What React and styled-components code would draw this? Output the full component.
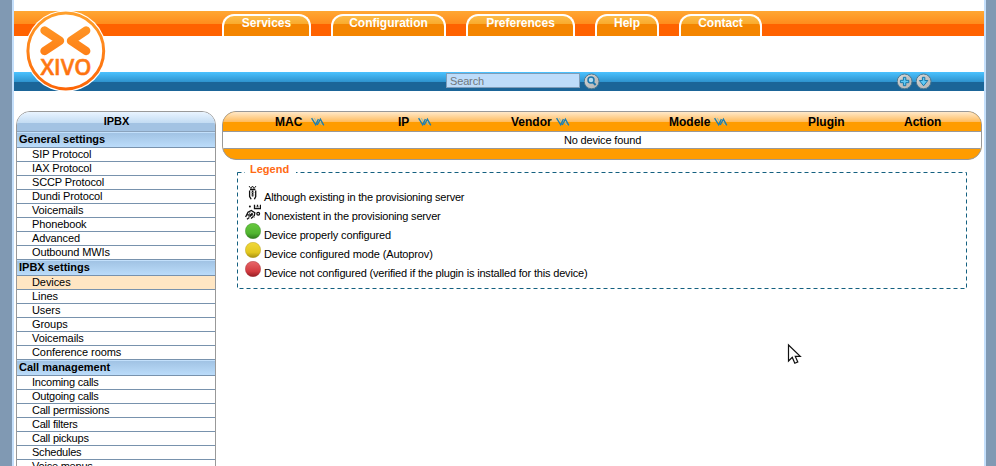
import React from "react";
import styled, { createGlobalStyle } from "styled-components";

const GlobalStyle = createGlobalStyle`
  * { box-sizing: border-box; }
  html, body { margin: 0; padding: 0; height: 100%; overflow: hidden; }
  body { font: 11px/13px "Liberation Sans", Arial, sans-serif; color: #000; background: #8099b3; }
`;

const Page = styled.div`
  width: 974px;
  height: 466px;
  margin-left: 12px;
  padding-top: 11px;
  background: #fff;
  border: solid #c4dffb;
  border-width: 0 2px;
  overflow: hidden;
`;

const Header = styled.header`
  position: relative;
  height: 80px;
`;

const NavBar = styled.nav`
  display: flex;
  align-items: flex-end;
  gap: 20px;
  height: 25px;
  padding-left: 208px;
  background: linear-gradient(#ffa733 0, #ff8c1c 13px, #ff6200 13px);
`;

const Tab = styled.a`
  width: ${(p) => p.$width}px;
  height: 22px;
  border: 2px solid #fff;
  border-bottom: 0;
  border-radius: 12px 12px 0 0;
  background: linear-gradient(#fdbb48 0, #f9ab2c 8px, #f48500 8px);
  color: #fff;
  font-size: 12px;
  font-weight: bold;
  line-height: 14px;
  text-align: center;
  white-space: nowrap;
`;

const ToolBar = styled.div`
  display: flex;
  align-items: flex-start;
  height: 19px;
  margin-top: 36px;
  padding: 1px 52px 0 432px;
  background: linear-gradient(#4bc2ff 0, #2e93ce 10px, #1b6598 10px);
`;

const SearchField = styled.input`
  width: 134px;
  height: 15px;
  margin: 0 4px 0 0;
  padding: 0 3px;
  border: 1px solid #7f9db9;
  border-radius: 0;
  outline: 0;
  background: #bddcfa;
  color: #71777c;
  font: 11px/13px "Liberation Sans", Arial, sans-serif;
  letter-spacing: -0.15px;
`;

const Actions = styled.div`
  display: flex;
  gap: 3px;
  margin-left: auto;
`;

const RoundIcon = styled.svg`
  display: block;
  width: 16px;
  height: 17px;
`;

const LogoMark = styled.svg`
  position: absolute;
  left: 11px;
  top: -1px;
  width: 82px;
  height: 81px;
`;

const Body = styled.div`
  display: flex;
  align-items: flex-start;
  gap: 6px;
  padding: 20px 2px 0;
`;

const Sidebar = styled.aside`
  flex: none;
  width: 200px;
  border: 1px solid #999;
  border-radius: 14px 14px 0 0;
  overflow: hidden;
`;

const SidebarTitle = styled.h1`
  height: 20px;
  margin: 0;
  padding-left: 1px;
  border-bottom: 1px solid #8aa3bd;
  background: linear-gradient(#e9f4ff 0, #c3dcf3 11px, #a3c3e3 11px);
  font-size: 11px;
  line-height: 19px;
  text-align: center;
`;

const SectionTitle = styled.h2`
  height: 16px;
  margin: 0;
  padding-left: 2px;
  border-bottom: 1px solid #7892ad;
  background: linear-gradient(#c3e0fb 0, #c3e0fb 1px, #a1c3e4 1px, #bbdcfa 15px);
  font-size: 11px;
  line-height: 15px;
`;

const MenuItem = styled.a`
  display: block;
  height: 14px;
  padding-left: 15px;
  border-bottom: 1px solid #7892ad;
  background: ${(p) => (p.$active ? "#ffe6c3" : "#fff")};
  letter-spacing: ${(p) => p.$tracking}px;
  line-height: 13px;
`;

const Main = styled.main`
  flex: 1;
  min-width: 0;
`;

const DeviceTable = styled.section`
  height: 49px;
  border: 1px solid #999;
  border-radius: 14px;
  background: #ff9c00;
  overflow: hidden;
`;

const HeadRow = styled.div`
  display: grid;
  grid-template-columns: 123px 113px 158px 139px 96px 1fr;
  height: 20px;
  padding-left: 52px;
  border-bottom: 1px solid #999;
  background: linear-gradient(#ffe9ca 0, #ffbb5c 10px, #ff9c00 10px);
  font-size: 12px;
  font-weight: bold;
`;

const HeadCell = styled.div`
  display: flex;
  align-items: flex-start;
  gap: ${(p) => p.$gap}px;
  line-height: 20px;
`;

const SortGlyph = styled.svg`
  width: 14px;
  height: 10px;
  margin-top: 5px;
`;

const EmptyRow = styled.div`
  height: 17px;
  padding-left: 1px;
  border-bottom: 1px solid #999;
  background: #fff;
  letter-spacing: -0.15px;
  line-height: 17px;
  text-align: center;
`;

const LegendBox = styled.fieldset`
  width: 730px;
  height: 126px;
  margin: 3px 0 0 15px;
  padding: 0;
  border: 0;
  position: relative;
`;

const LegendTitle = styled.legend`
  position: relative;
  z-index: 1;
  margin-left: 8px;
  padding: 0 7px 0 5px;
  height: 13px;
  background: #fff;
  color: #ff6a13;
  font-weight: bold;
`;

const DashedFrame = styled.svg`
  position: absolute;
  left: 0;
  top: -4px;
  width: 730px;
  height: 117px;
`;

const LegendList = styled.ul`
  position: relative;
  margin: 9px 0 0 8px;
  padding: 0;
  list-style: none;
`;

const LegendRow = styled.li`
  display: flex;
  align-items: flex-end;
  gap: 3px;
  height: 19px;
`;

const LegendText = styled.span`
  letter-spacing: ${(p) => p.$tracking}px;
  line-height: 13px;
`;

const LegendIcon = styled.svg`
  width: 16px;
  height: 16px;
  margin-bottom: 3px;
`;

const Pointer = styled.svg`
  position: absolute;
  left: 787px;
  top: 343px;
  width: 15px;
  height: 23px;
`;

const tabs = [
  ["Services", 89],
  ["Configuration", 115],
  ["Preferences", 109],
  ["Help", 64],
  ["Contact", 83],
];

const columns = [
  { name: "MAC", gap: 9, sortable: true },
  { name: "IP", gap: 9, sortable: true },
  { name: "Vendor", gap: 4, sortable: true },
  { name: "Modele", gap: 4, sortable: true },
  { name: "Plugin" },
  { name: "Action" },
];

const menu = [
  ["General settings", -0.13, ["SIP Protocol", "IAX Protocol", "SCCP Protocol", "Dundi Protocol", "Voicemails", "Phonebook", "Advanced", "Outbound MWIs"]],
  ["IPBX settings", -0.08, ["Devices", "Lines", "Users", "Groups", "Voicemails", "Conference rooms"]],
  ["Call management", -0.22, ["Incoming calls", "Outgoing calls", "Call permissions", "Call filters", "Call pickups", "Schedules", "Voice menus"]],
];

const legend = [
  ["exists", "Although existing in the provisioning server", -0.2],
  ["missing", "Nonexistent in the provisioning server", -0.18],
  ["green", "Device properly configured", -0.15],
  ["yellow", "Device configured mode (Autoprov)", -0.13],
  ["red", "Device not configured (verified if the plugin is installed for this device)", -0.18],
];

const ballColors = {
  green: ["#68c93f", "#51b52f", "#2f7a1b"],
  yellow: ["#f0d83c", "#e3c81f", "#a8900f"],
  red: ["#e8686a", "#d33b40", "#951d24"],
};

function Logo() {
  return (
    <LogoMark viewBox="0 0 82 81">
      <defs>
        <linearGradient id="logo" gradientUnits="userSpaceOnUse" x1="0" y1="2" x2="0" y2="80">
          <stop offset="0" stopColor="#ffa02c" />
          <stop offset="1" stopColor="#fd6506" />
        </linearGradient>
      </defs>
      <circle cx="40.8" cy="41" r="40.6" fill="#fff" />
      <circle cx="40.8" cy="41" r="37.9" fill="none" stroke="url(#logo)" strokeWidth="3" />
      <path d="M19.5 20.5 L35 30.8 L19.5 41 M61.2 20.5 L46 30.8 L61.2 41" fill="none" stroke="url(#logo)" strokeWidth="8.4" strokeLinecap="round" strokeLinejoin="round" />
      <text x="15.5" y="64.6" textLength="51" lengthAdjust="spacingAndGlyphs" fontFamily="Open Sans, sans-serif" fontSize="21.5" fontWeight="600" fill="url(#logo)" stroke="url(#logo)" strokeWidth=".5" strokeLinejoin="round">XIVO</text>
    </LogoMark>
  );
}

function ToolIcon({ kind }) {
  return (
    <RoundIcon viewBox="0 0 16 17">
      <defs>
        <linearGradient id="metal" x1="0" y1="0" x2="1" y2="1">
          <stop offset="0" stopColor="#ddd" />
          <stop offset=".5" stopColor="#c2c2c2" />
          <stop offset="1" stopColor="#b5b5b5" />
        </linearGradient>
      </defs>
      <circle cx="7.6" cy="8.4" r="7.4" fill="url(#metal)" stroke="#4b7890" />
      {kind === "search" && (
        <g fill="none" stroke="#1d76aa">
          <path d="m9.1 9.4 2.5 2.6" strokeWidth="2" />
          <circle cx="7" cy="7" r="3" fill="#b4dcf0" strokeWidth="1.5" />
        </g>
      )}
      {kind === "add" && <path d="M6.4 4.3h2.4v3h3v2.4h-3v3H6.4v-3h-3V7.3h3z" fill="#5fc8f5" stroke="#1677a8" />}
      {kind === "down" && <path d="M6.4 4.3h2.4v3.2h3l-4.2 5.3-4.2-5.3h3z" fill="#5fc8f5" stroke="#1677a8" />}
    </RoundIcon>
  );
}

function SortIcon() {
  return (
    <SortGlyph viewBox="0 0 14 10" fill="none">
      <path d="M3.4 1.2 6.2 6.2M8.8 4.8 10.6 8" stroke="#8abfc4" strokeWidth="1" />
      <path d="M.6 1.2 4.7 7.8 7.4 2M6.2 8 9.4 2.2l3.4 6.2" stroke="#167eb5" strokeWidth="1.3" />
    </SortGlyph>
  );
}

function StatusIcon({ kind }) {
  if (kind === "exists")
    return (
      <LegendIcon viewBox="0 0 16 16" fill="none" stroke="#111">
        <path d="M4 1 6 3.5 7.5 1 9 3.5 11 1" strokeWidth=".9" />
        <path d="M5 4.5h5.4" strokeWidth="1.5" />
        <path d="M4.6 5.5v6l1.6 2.8M10.7 5.5v6L9.4 14.3" strokeWidth="1.3" />
        <path d="M7.6 5.5v6" strokeWidth="1.6" />
        <path d="M6 7.5h3.5M6 10h3.5" stroke="#888" strokeWidth=".7" />
      </LegendIcon>
    );
  if (kind === "missing")
    return (
      <LegendIcon viewBox="0 0 16 16" fill="none" stroke="#111">
        <path d="M9.5 .8v3.9h6V.8M12.5 .8v2.2" strokeWidth="1.3" />
        <path d="M10.5 3h4" stroke="#777" />
        <circle cx="4.9" cy="2.6" r="1" fill="#111" stroke="none" />
        <circle cx="13.2" cy="9.8" r="1.4" strokeWidth="1.2" />
        <path d="M.6 13 3 8.2 6.3 6.4l3.5 2.3-.5 3L6 14.5M2 15.2l2.3-1.7M2.5 11h3.2l1.8-2M4.5 12.7l3.2-2.8" strokeWidth="1.3" />
        <path d="M5 8 3.5 14M7 11.5l2.5 2" stroke="#666" />
      </LegendIcon>
    );
  const [top, middle, bottom] = ballColors[kind];
  return (
    <LegendIcon viewBox="0 0 16 16">
      <defs>
        <linearGradient id={kind} x1="0" y1="0" x2="0" y2="1">
          <stop offset="0" stopColor={top} />
          <stop offset=".65" stopColor={middle} />
          <stop offset="1" stopColor={bottom} />
        </linearGradient>
      </defs>
      <circle cx="8" cy="8" r="7.7" fill={`url(#${kind})`} stroke={bottom} strokeOpacity=".6" strokeWidth=".6" />
    </LegendIcon>
  );
}

export default function App() {
  return (
    <>
      <GlobalStyle />
      <Page>
        <Header>
          <NavBar>
            {tabs.map(([name, width]) => <Tab key={name} $width={width}>{name}</Tab>)}
          </NavBar>
          <ToolBar>
            <SearchField placeholder="" defaultValue="Search" />
            <ToolIcon kind="search" />
            <Actions>
              <ToolIcon kind="add" />
              <ToolIcon kind="down" />
            </Actions>
          </ToolBar>
          <Logo />
        </Header>
        <Body>
          <Sidebar>
            <SidebarTitle>IPBX</SidebarTitle>
            {menu.map(([title, tracking, items]) => (
              <React.Fragment key={title}>
                <SectionTitle>{title}</SectionTitle>
                {items.map((item) => <MenuItem key={item} $tracking={tracking} $active={item === "Devices"}>{item}</MenuItem>)}
              </React.Fragment>
            ))}
          </Sidebar>
          <Main>
            <DeviceTable>
              <HeadRow>
                {columns.map((c) => (
                  <HeadCell key={c.name} $gap={c.gap}>{c.name}{c.sortable && <SortIcon />}</HeadCell>
                ))}
              </HeadRow>
              <EmptyRow>No device found</EmptyRow>
            </DeviceTable>
            <LegendBox>
              <DashedFrame viewBox="0 0 730 117">
                <rect x=".5" y=".5" width="729" height="116" fill="none" stroke="#146080" strokeDasharray="4 3" />
              </DashedFrame>
              <LegendTitle>Legend</LegendTitle>
              <LegendList>
                {legend.map(([kind, text, tracking]) => (
                  <LegendRow key={kind}><StatusIcon kind={kind} /><LegendText $tracking={tracking}>{text}</LegendText></LegendRow>
                ))}
              </LegendList>
            </LegendBox>
          </Main>
        </Body>
      </Page>
      <Pointer viewBox="0 0 15 23">
        <path d="M1.5 2v16l3.8-3.6 2.5 5.8 3-1.3-2.5-5.5h5z" fill="#fff" stroke="#111" strokeWidth="1.2" />
      </Pointer>
    </>
  );
}
